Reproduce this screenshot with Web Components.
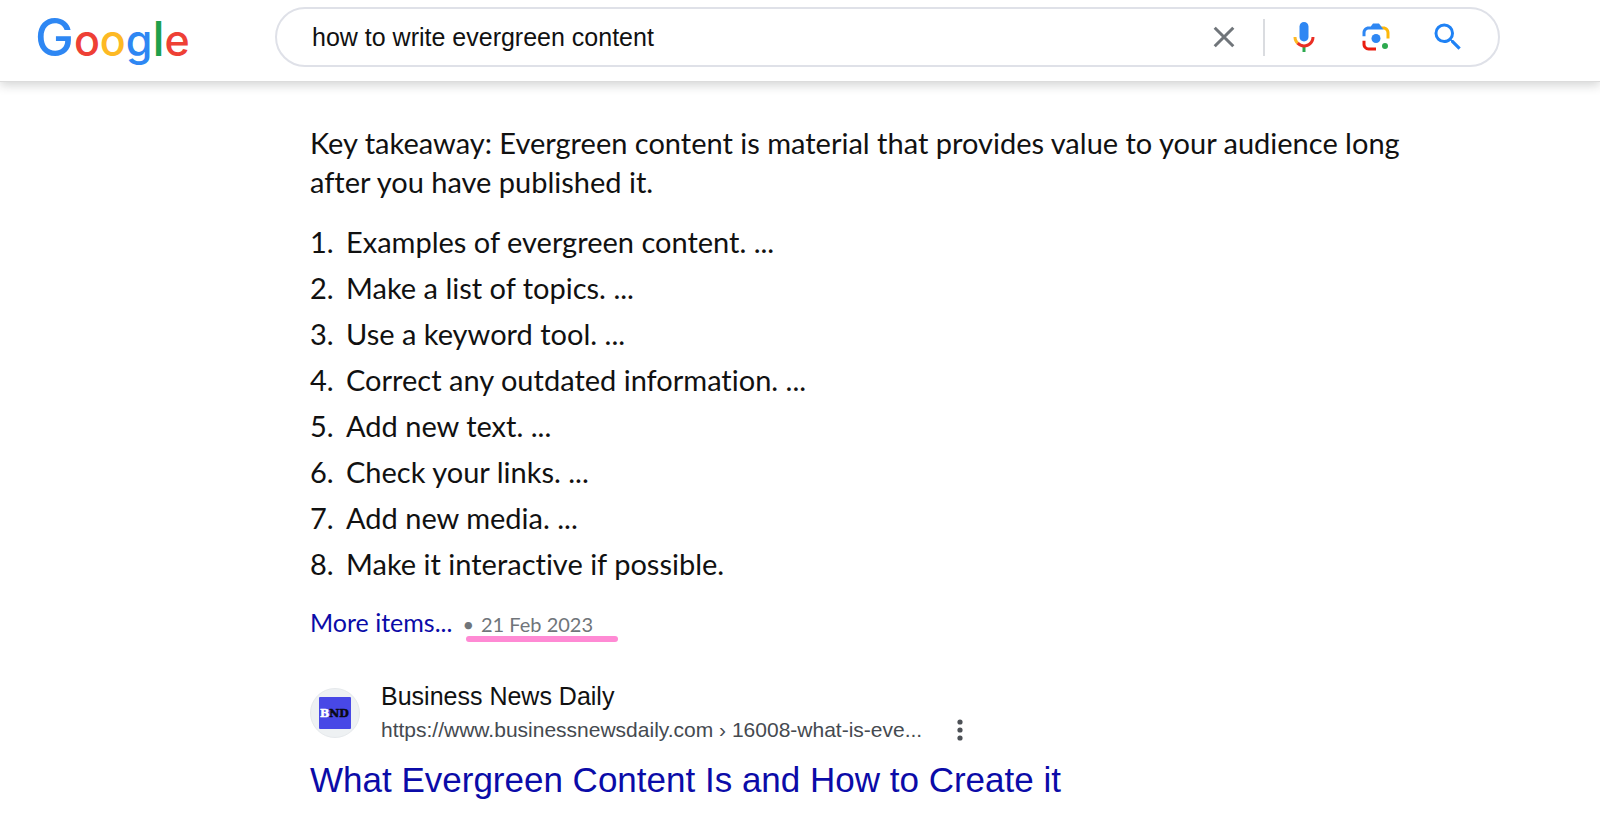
<!DOCTYPE html>
<html lang="en">
<head>
<meta charset="utf-8">
<meta name="viewport" content="width=device-width, initial-scale=1">
<title>how to write evergreen content - Google Search</title>
<style>
  body {
    margin: 0;
    background: #fff;
    color: #111;
    font-family: "Liberation Sans", Arial, sans-serif;
  }
</style>
</head>
<body>

<search-header>
  <google-logo slot="logo"></google-logo>
  <search-box query="how to write evergreen content"></search-box>
</search-header>

<results-page>
  <featured-snippet more="More items..." date="21 Feb 2023">
    Key takeaway: Evergreen content is material that provides value to your audience long after you have published it.
    <snippet-item slot="items" number="1">Examples of evergreen content. ...</snippet-item>
    <snippet-item slot="items" number="2">Make a list of topics. ...</snippet-item>
    <snippet-item slot="items" number="3">Use a keyword tool. ...</snippet-item>
    <snippet-item slot="items" number="4">Correct any outdated information. ...</snippet-item>
    <snippet-item slot="items" number="5">Add new text. ...</snippet-item>
    <snippet-item slot="items" number="6">Check your links. ...</snippet-item>
    <snippet-item slot="items" number="7">Add new media. ...</snippet-item>
    <snippet-item slot="items" number="8">Make it interactive if possible.</snippet-item>
  </featured-snippet>
  <search-result href="#result">
    <bnd-icon slot="icon"></bnd-icon>
    <span slot="site">Business News Daily</span>
    <span slot="url">https://www.businessnewsdaily.com › 16008-what-is-eve...</span>
    What Evergreen Content Is and How to Create it
  </search-result>
</results-page>

<script>
class SearchHeader extends HTMLElement {
  constructor() {
    super();
    this.attachShadow({ mode: 'open' });
  }

  connectedCallback() {
    this.shadowRoot.innerHTML = `
      <style>
        :host {
          display: block;
          background: #fff;
          border-bottom: 1px solid #dcdcdc;
          box-shadow: 0 3px 10px rgba(32, 33, 36, 0.2);
        }
        header {
          display: flex;
          align-items: flex-start;
          gap: 85px;
          padding: 0 100px 0 34px;
        }
        ::slotted(search-box) {
          flex: 1;
          min-width: 0;
          padding: 7px 0 14px;
        }
      </style>
      <header>
        <slot name="logo"></slot>
        <slot></slot>
      </header>
    `;
  }
}
customElements.define('search-header', SearchHeader);

class GoogleLogo extends HTMLElement {
  constructor() {
    super();
    this.attachShadow({ mode: 'open' });
  }

  connectedCallback() {
    this.shadowRoot.innerHTML = `
      <style>
        :host {
          display: block;
          flex: none;
        }
        a, svg { display: block; }
        text {
          font-family: Inter, Roboto, sans-serif;
          font-size: 43px;
          font-weight: 500;
        }
        .cap { font-size: 52px; }
        .tall { font-size: 48px; }
        .blue { fill: #2e87f3; }
        .red { fill: #ee4035; }
        .yellow { fill: #fdb924; }
        .green { fill: #1fa04b; }
      </style>
      <a href="#home" aria-label="Google">
        <svg width="156" height="72" viewBox="0 0 156 72">
          <text x="1" y="56"><tspan class="blue cap">G</tspan><tspan class="red">o</tspan><tspan class="yellow">o</tspan><tspan class="blue">g</tspan><tspan class="green tall">l</tspan><tspan class="red">e</tspan></text>
        </svg>
      </a>
    `;
  }
}
customElements.define('google-logo', GoogleLogo);

class SearchBox extends HTMLElement {
  constructor() {
    super();
    this.attachShadow({ mode: 'open' });
  }

  connectedCallback() {
    this.shadowRoot.innerHTML = `
      <style>
        :host { display: block; }
        form {
          display: flex;
          align-items: center;
          box-sizing: border-box;
          height: 60px;
          margin: 0;
          padding: 0 32px 0 35px;
          border: 2px solid #dfe1e8;
          border-radius: 30px;
        }
        input {
          flex: 1;
          min-width: 0;
          padding: 0;
          border: 0;
          outline: 0;
          background: none;
          color: #111;
          font: 25px/32px "Liberation Sans", Arial, sans-serif;
        }
        button {
          display: flex;
          padding: 0;
          border: 0;
          background: none;
          cursor: pointer;
        }
        svg {
          display: block;
          width: 36px;
          height: 36px;
        }
        .divider {
          width: 2px;
          height: 37px;
          margin: 0 21px;
          background: #dadce0;
        }
        .tools {
          display: flex;
          gap: 36px;
        }
      </style>
      <form role="search">
        <input type="text" name="q" aria-label="Search">
        <button type="reset" aria-label="Clear">
          <svg viewBox="0 0 24 24" fill="none" stroke="#70757a" stroke-width="2"><path d="M5.800 5.800 18.200 18.200M18.200 5.800 5.800 18.200"/></svg>
        </button>
        <span class="divider"></span>
        <div class="tools">
          <button type="button" aria-label="Search by voice">
            <svg viewBox="0 0 24 24">
              <path fill="#2e87f3" d="M12 15c1.66 0 3-1.31 3-2.97V5.010C15 3.350 13.660 2 12 2S9 3.340 9 5.010v7.020C9 13.690 10.340 15 12 15z"/>
              <path fill="#2da94f" d="M11 18.080h2V22h-2z"/>
              <path fill="#fdb924" d="M7.050 16.870C5.780 15.540 5 14.040 5 12h2c0 1.450.56 2.420 1.470 3.380v.32l-1.150 1.180z"/>
              <path fill="#ea2e24" d="M12 16.930a4.970 5.250 0 0 1-3.540-1.550l-1.410 1.490C8.310 18.210 10.070 19 12 19c3.870 0 6.990-2.920 6.990-7H17c0 2.920-2.240 4.930-5 4.930z"/>
            </svg>
          </button>
          <button type="button" aria-label="Search by image">
            <svg viewBox="0 0 192 192">
              <circle fill="#2da94f" cx="144" cy="144" r="16"/>
              <circle fill="#2e87f3" cx="96" cy="104" r="24"/>
              <path fill="#ea1d0f" d="M24 135.200C24 153.310 38.690 168 56.800 168H96v-16l-40.100-.1C47.100 151.900 40 143.710 40 134v-18H24z"/>
              <path fill="#fdb70a" d="M168 72.800C168 54.690 153.310 40 135.200 40H116l20 16c8.800 0 16 8.290 16 18v30h16z"/>
              <path fill="#2e87f3" d="M112 24H80L68 40H56.800C38.690 40 24 54.690 24 72.800V92h16V74c0-9.710 7.200-18 16-18h80z"/>
            </svg>
          </button>
          <button type="submit" aria-label="Search">
            <svg viewBox="0 0 24 24" fill="#1f82f5"><path d="M15.500 14h-.79l-.28-.27A6.470 6.470 0 0 0 16 9.500 6.500 6.500 0 1 0 9.500 16c1.610 0 3.090-.59 4.230-1.570l.27.28v.79l5 4.990L20.490 19zm-6 0C7.010 14 5 11.990 5 9.500S7.010 5 9.500 5 14 7.010 14 9.500 11.990 14 9.500 14z"/></svg>
          </button>
        </div>
      </form>
    `;
    this.shadowRoot.querySelector('input').value = this.getAttribute('query');
  }
}
customElements.define('search-box', SearchBox);

class ResultsPage extends HTMLElement {
  constructor() {
    super();
    this.attachShadow({ mode: 'open' });
  }

  connectedCallback() {
    this.shadowRoot.innerHTML = `
      <style>
        :host { display: block; }
        main {
          display: flex;
          flex-direction: column;
          gap: 39px;
          max-width: 1120px;
          padding: 41px 20px 16px 310px;
        }
      </style>
      <main><slot></slot></main>
    `;
  }
}
customElements.define('results-page', ResultsPage);

class FeaturedSnippet extends HTMLElement {
  constructor() {
    super();
    this.attachShadow({ mode: 'open' });
  }

  connectedCallback() {
    this.shadowRoot.innerHTML = `
      <style>
        :host {
          display: block;
          font-family: Lato, Roboto, sans-serif;
          font-variant-ligatures: none;
        }
        p {
          margin: 0 0 18px;
          font-size: 29px;
          line-height: 39px;
        }
        .items { margin-bottom: 19px; }
        .foot {
          display: flex;
          align-items: baseline;
          gap: 10px;
          line-height: 32px;
        }
        a {
          color: #0b0ba8;
          font-size: 25px;
          text-decoration: none;
        }
        .date {
          position: relative;
          display: flex;
          gap: 7px;
          color: #70757a;
          font-size: 20px;
        }
        /* marker stroke under the date */
        .date::after {
          content: "";
          position: absolute;
          left: 4px;
          right: -25px;
          bottom: -2px;
          height: 6px;
          border-radius: 3px;
          background: #ff8ad4;
        }
      </style>
      <p><slot></slot></p>
      <div class="items" role="list"><slot name="items"></slot></div>
      <div class="foot">
        <a href="#more">${this.getAttribute('more')}</a>
        <span class="date"><span>•</span><time datetime="2023-02-21">${this.getAttribute('date')}</time></span>
      </div>
    `;
  }
}
customElements.define('featured-snippet', FeaturedSnippet);

class SnippetItem extends HTMLElement {
  constructor() {
    super();
    this.attachShadow({ mode: 'open' });
  }

  connectedCallback() {
    this.setAttribute('role', 'listitem');
    this.shadowRoot.innerHTML = `
      <style>
        :host {
          display: flex;
          font-size: 29px;
          line-height: 46px;
        }
        .number {
          flex: none;
          width: 36px;
        }
      </style>
      <span class="number">${this.getAttribute('number')}.</span>
      <span><slot></slot></span>
    `;
  }
}
customElements.define('snippet-item', SnippetItem);

class BndIcon extends HTMLElement {
  constructor() {
    super();
    this.attachShadow({ mode: 'open' });
  }

  connectedCallback() {
    this.shadowRoot.innerHTML = `
      <style>
        :host {
          display: flex;
          flex: none;
          align-items: center;
          justify-content: center;
          box-sizing: border-box;
          width: 50px;
          height: 50px;
          border: 1px solid #e6e9ec;
          border-radius: 50%;
          background: #eef1f3;
        }
        svg { display: block; }
        text {
          font: bold 11px "DejaVu Serif", serif;
          stroke-width: 0.5px;
        }
        .white { fill: #fff; stroke: #fff; }
        .black { fill: #0a0a14; stroke: #0a0a14; }
      </style>
      <svg width="32" height="32" viewBox="0 0 32 32" role="img" aria-label="BND">
        <rect width="32" height="32" rx="1" fill="#4848e6"/>
        <text x="1" y="20"><tspan class="white">B</tspan><tspan class="black">ND</tspan></text>
      </svg>
    `;
  }
}
customElements.define('bnd-icon', BndIcon);

class SearchResult extends HTMLElement {
  constructor() {
    super();
    this.attachShadow({ mode: 'open' });
  }

  connectedCallback() {
    this.shadowRoot.innerHTML = `
      <style>
        :host { display: block; }
        .source {
          display: flex;
          align-items: center;
          gap: 21px;
        }
        .site {
          font-size: 25px;
          line-height: 34px;
        }
        .line {
          display: flex;
          align-items: center;
          gap: 26px;
        }
        .url {
          color: #454a50;
          font-size: 21px;
          line-height: 34px;
        }
        button {
          display: flex;
          padding: 0;
          border: 0;
          background: none;
          cursor: pointer;
        }
        h3 {
          margin: 10px 0 0;
          font-size: 35px;
          font-weight: 400;
          line-height: 46px;
        }
        a {
          color: #0b0ba8;
          text-decoration: none;
        }
      </style>
      <div class="source">
        <slot name="icon"></slot>
        <div>
          <div class="site"><slot name="site"></slot></div>
          <div class="line">
            <span class="url"><slot name="url"></slot></span>
            <button type="button" aria-label="About this result">
              <svg width="24" height="24" viewBox="0 0 24 24" fill="#4d5156"><circle cx="12" cy="4" r="2.600"/><circle cx="12" cy="12" r="2.600"/><circle cx="12" cy="20" r="2.600"/></svg>
            </button>
          </div>
        </div>
      </div>
      <h3><a href="${this.getAttribute('href')}"><slot></slot></a></h3>
    `;
  }
}
customElements.define('search-result', SearchResult);
</script>
</body>
</html>
